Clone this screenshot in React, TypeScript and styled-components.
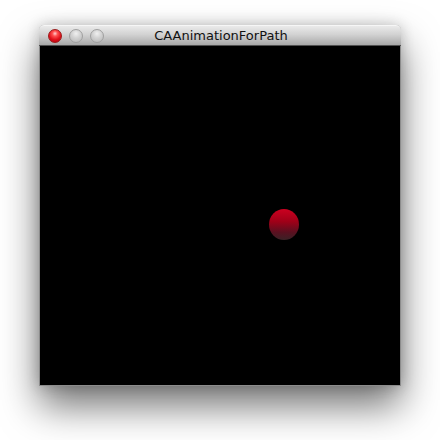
import React from "react";
import styled, { createGlobalStyle } from "styled-components";

const Global = createGlobalStyle`
  html, body { margin: 0; padding: 0; background: #ffffff; }
  body { font-family: "Lucida Grande", "DejaVu Sans", "Liberation Sans", sans-serif; }
`;

const Page = styled.div`
  width: 440px;
  height: 440px;
  padding: 25px 0 0 39px;
  box-sizing: border-box;
`;

const Window = styled.div`
  width: 362px;
  display: flex;
  flex-direction: column;
  border-radius: 5px 5px 0 0;
  box-shadow: 0 20px 38px rgba(0, 0, 0, 0.55), 0 0 14px rgba(0, 0, 0, 0.2);
  background: #8c8c8c;
`;

const TitleBar = styled.div`
  height: 21px;
  position: relative;
  display: flex;
  align-items: center;
  padding-left: 9px;
  gap: 7px;
  border-radius: 5px 5px 0 0;
  background: linear-gradient(#eaeaea, #d2d2d2 45%, #a8a8a8 100%);
  border-top: 1px solid #f6f6f6;
  box-sizing: border-box;
  border-bottom: 1px solid #505050;
`;

const Light = styled.div<{ $red?: boolean }>`
  width: 14px;
  height: 14px;
  border-radius: 50%;
  box-sizing: border-box;
  border: 1px solid ${(p) => (p.$red ? "#9a1a1a" : "#a0a0a0")};
  background: ${(p) =>
    p.$red
      ? "radial-gradient(circle at 50% 30%, #ffd0d0 0%, #ff5050 25%, #e0101a 60%, #b00010 100%)"
      : "radial-gradient(circle at 50% 30%, #f0f0f0 0%, #d4d4d4 40%, #b4b4b4 100%)"};
`;

const Title = styled.div`
  position: absolute;
  left: 0;
  right: 0;
  top: 0;
  bottom: 0;
  display: flex;
  align-items: center;
  justify-content: center;
  font-size: 13px;
  color: #111;
  padding-left: 2px;
  pointer-events: none;
`;

const Content = styled.div`
  height: 339px;
  margin: 0 1px 1px 1px;
  background: #000;
  position: relative;
`;

const Ball = styled.div`
  position: absolute;
  left: 229px;
  top: 163px;
  width: 30px;
  height: 31px;
  border-radius: 50%;
  background: linear-gradient(#cc0020 0%, #a00018 40%, #5a1020 75%, #3a2226 100%);
`;

export default function App() {
  return (
    <Page>
      <Global />
      <Window>
        <TitleBar>
          <Light $red />
          <Light />
          <Light />
          <Title>CAAnimationForPath</Title>
        </TitleBar>
        <Content>
          <Ball />
        </Content>
      </Window>
    </Page>
  );
}
